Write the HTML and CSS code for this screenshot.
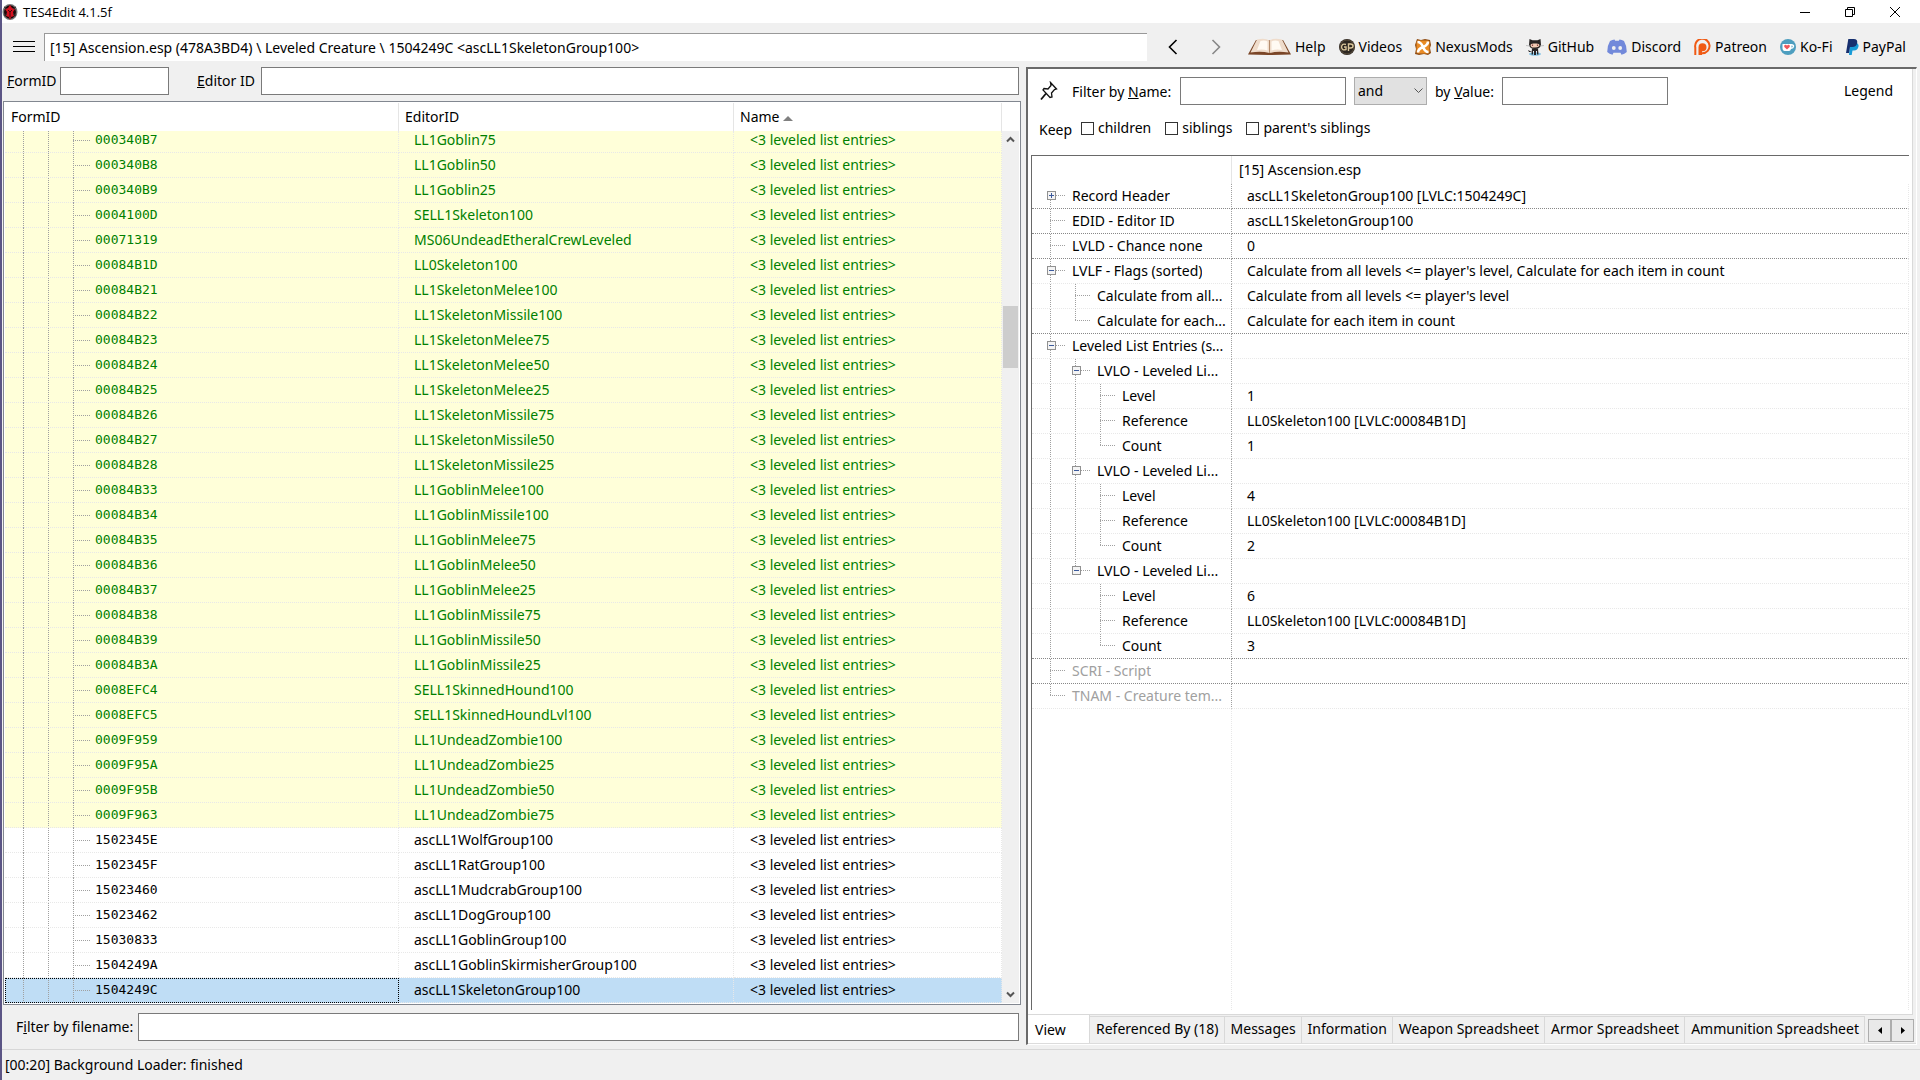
FILE: index.html
```html
<!DOCTYPE html>
<html lang="en">
<head>
<meta charset="utf-8">
<title>TES4Edit 4.1.5f</title>
<link rel="stylesheet" href="styles.css">
</head>
<body>
<div class="window">
  <header class="titlebar">
    <svg class="app-icon" width="16" height="20" viewBox="0 0 16 20"><ellipse cx="8" cy="10" rx="7.500" ry="8" fill="#777"/><ellipse cx="8" cy="10" rx="6" ry="6.800" fill="#1c0708"/><path d="M8 3l2 3 3 1-2 3 1 4-3 1-1 3-1-3-3-1 1-4-2-3 3-1z" fill="#d5101e"/><path d="M2 5l3 2M14 5l-3 2M2 14l3-2M14 14l-3-2" stroke="#333" fill="none"/><path d="M6 8l2 2 2-2M8 10v5" stroke="#40060b" fill="none"/></svg>
    <h1>TES4Edit 4.1.5f</h1>
    <div class="win-buttons">
      <button aria-label="Minimize"><svg width="12" height="12"><path d="M1 6.500h10" stroke="#000"/></svg></button>
      <button aria-label="Restore"><svg width="12" height="12"><path d="M1.500 3.500h7v7h-7zM3.500 3V1.500h7v7H9" stroke="#000" fill="none"/></svg></button>
      <button aria-label="Close"><svg width="12" height="12"><path d="M1 1l10 10M11 1L1 11" stroke="#000"/></svg></button>
    </div>
  </header>

  <nav class="toolbar">
    <button class="menu" aria-label="Menu"><svg width="22" height="12"><path d="M0 .5h22M0 5.500h22M0 10.500h22" stroke="#000"/></svg></button>
    <input class="path" aria-label="Path" value="[15] Ascension.esp (478A3BD4) \ Leveled Creature \ 1504249C &lt;ascLL1SkeletonGroup100&gt;">
    <button class="step" aria-label="Back"><svg width="12" height="16"><path d="M9.500 1L2.500 8l7 7" stroke="#000" stroke-width="1.600" fill="none"/></svg></button>
    <button class="step" aria-label="Forward"><svg width="12" height="16"><path d="M2.500 1l7 7-7 7" stroke="#888" stroke-width="1.600" fill="none"/></svg></button>
    <div class="links">
      <a href="#help"><svg width="43" height="18" viewBox="0 0 43 18"><path d="M0 16.500L8 2h27l8 14.500-19 .5h-4z" fill="#7a4526"/><path d="M2.500 14.500L9 1.500q8-2 12.500 1v12.500q-8-2-19-.5z" fill="#efdccb"/><path d="M40.500 14.500L34 1.500q-8-2-12.500 1v12.500q8-2 19-.5z" fill="#efdccb"/><path d="M9 12l3.500-9q4-1 7 .5v9q-5-1.500-10.500-.5zM34 12l-3.500-9q-4-1-7 .5v9q5-1.500 10.500-.5z" fill="#fffaf3"/><path d="M21.500 3v12" stroke="#b48c6c"/></svg>Help</a>
      <a href="#videos"><svg width="16" height="16" viewBox="0 0 16 16"><circle cx="8" cy="8" r="8" fill="#2c2620"/><circle cx="8" cy="8" r="7" fill="none" stroke="#5a4d3c"/><path d="M7 5.500Q3 4 2.500 8 3 12 7 10.500V8H5M9.500 12V5h2q2.500.200 2.500 2t-2.500 2h-2" fill="none" stroke="#d9c59a" stroke-width="1.400"/></svg>Videos</a>
      <a href="#nexus"><svg width="16" height="16" viewBox="0 0 16 16"><path d="M2 0l4 1 4-1 5 1 1 5-1 3 1 5-3 2-4-1-5 1-4-1 1-5-1-4z" fill="#8f4c12"/><rect x="1.500" y="1.500" width="13" height="13" rx="2" fill="#e98b25"/><path d="M8 8Q6 3 2.500 3M8 8q5-2 5-5.500M8 8q2 5 5.500 5M8 8q-5 2-5 5.500" stroke="#fff" stroke-width="2.600" fill="none"/></svg>NexusMods</a>
      <a href="#github"><svg width="18" height="18" viewBox="0 0 18 18"><ellipse cx="9" cy="16" rx="6" ry="1.800" fill="#86c5e6"/><path d="M3.500 1l3 1.300h5L14.500 1l.5 6q-1 4-6 4T3 7z" fill="#272323"/><path d="M4.500 7q0-2 4.500-1.500Q13.500 5 13.500 7t-4.500 2.500T4.500 7z" fill="#f2cbb4"/><path d="M6.500 6.500v1.500M11.500 6.500v1.500" stroke="#844" stroke-width="1.200"/><path d="M6 10.500h6l.5 6H11V13h-1v4H8v-4H7v3.500H5.500zM6 14H3l-1-2" fill="#272323"/><path d="M0 7.500l4 .5M18 7.500l-4 .5" stroke="#aaa" stroke-width=".7"/></svg>GitHub</a>
      <a href="#discord"><svg width="20" height="16" viewBox="0 0 20 16"><path d="M3 2Q5.500.5 7.500.5l.7 1.300h3.600L12.500.5Q15 .5 17 2q3 5 2.800 11-2.300 2.300-5.300 2.700l-1-1.900h-7l-1 1.900Q2.500 15.300.2 13 0 7 3 2z" fill="#7289da"/><ellipse cx="6.800" cy="9" rx="1.900" ry="2.100" fill="#f0f0f0"/><ellipse cx="13.200" cy="9" rx="1.900" ry="2.100" fill="#f0f0f0"/></svg>Discord</a>
      <a href="#patreon"><svg width="17" height="16" viewBox="0 0 17 16"><path d="M1.300 16V8.500a7.200 7.200 0 1 1 7.200 5.700h-1" fill="none" stroke="#f05a14" stroke-width="2"/><path d="M4.500 16V8.300a4 4 0 1 1 4 4H8V16z" fill="#f05a14"/></svg>Patreon</a>
      <a href="#kofi"><svg width="16" height="16" viewBox="0 0 16 16"><circle cx="8" cy="8" r="8" fill="#4d9ebf"/><path d="M2.500 5h9q3 .2 2.700 2.500T11 10q-.5 2-2 2H4.500q-2-.3-2-2.500z" fill="#fff"/><path d="M11.500 6.500q1.300 0 1.200 1t-1.200 1z" fill="#4d9ebf"/><path d="M7 10.500L4.300 8q-.8-2 1-2.200Q6.500 5.700 7 6.700q.5-1 1.700-.9 1.800.2 1 2.200z" fill="#f0575b"/></svg>Ko-Fi</a>
      <a href="#paypal"><svg width="13" height="16" viewBox="0 0 13 16"><path d="M4 4h6.500q2.500 1 2 3.500-.8 4-4.500 4H6.500L5.700 16H3z" fill="#179bd7"/><path d="M2.300 0h5.500q4 .2 3.400 4-.7 4-5 4H4L3 14H0z" fill="#17306f"/></svg>PayPal</a>
    </div>
  </nav>

  <main class="panes">
    <section class="nav-pane">
      <form class="search">
        <label for="formid"><u>F</u>ormID</label><input id="formid" class="box short">
        <label for="editorid" class="second"><u>E</u>ditor ID</label><input id="editorid" class="box grow">
      </form>
      <div class="list-frame">
        <div class="list">
          <table class="records">
            <colgroup><col class="c-id"><col class="c-editor"><col class="c-name"></colgroup>
            <thead><tr><th>FormID</th><th>EditorID</th><th>Name <span class="sort"></span></th></tr></thead>
            <tbody>
              <tr class="ok"><td>000340B7</td><td>LL1Goblin75</td><td>&lt;3 leveled list entries&gt;</td></tr>
              <tr class="ok"><td>000340B8</td><td>LL1Goblin50</td><td>&lt;3 leveled list entries&gt;</td></tr>
              <tr class="ok"><td>000340B9</td><td>LL1Goblin25</td><td>&lt;3 leveled list entries&gt;</td></tr>
              <tr class="ok"><td>0004100D</td><td>SELL1Skeleton100</td><td>&lt;3 leveled list entries&gt;</td></tr>
              <tr class="ok"><td>00071319</td><td>MS06UndeadEtheralCrewLeveled</td><td>&lt;3 leveled list entries&gt;</td></tr>
              <tr class="ok"><td>00084B1D</td><td>LL0Skeleton100</td><td>&lt;3 leveled list entries&gt;</td></tr>
              <tr class="ok"><td>00084B21</td><td>LL1SkeletonMelee100</td><td>&lt;3 leveled list entries&gt;</td></tr>
              <tr class="ok"><td>00084B22</td><td>LL1SkeletonMissile100</td><td>&lt;3 leveled list entries&gt;</td></tr>
              <tr class="ok"><td>00084B23</td><td>LL1SkeletonMelee75</td><td>&lt;3 leveled list entries&gt;</td></tr>
              <tr class="ok"><td>00084B24</td><td>LL1SkeletonMelee50</td><td>&lt;3 leveled list entries&gt;</td></tr>
              <tr class="ok"><td>00084B25</td><td>LL1SkeletonMelee25</td><td>&lt;3 leveled list entries&gt;</td></tr>
              <tr class="ok"><td>00084B26</td><td>LL1SkeletonMissile75</td><td>&lt;3 leveled list entries&gt;</td></tr>
              <tr class="ok"><td>00084B27</td><td>LL1SkeletonMissile50</td><td>&lt;3 leveled list entries&gt;</td></tr>
              <tr class="ok"><td>00084B28</td><td>LL1SkeletonMissile25</td><td>&lt;3 leveled list entries&gt;</td></tr>
              <tr class="ok"><td>00084B33</td><td>LL1GoblinMelee100</td><td>&lt;3 leveled list entries&gt;</td></tr>
              <tr class="ok"><td>00084B34</td><td>LL1GoblinMissile100</td><td>&lt;3 leveled list entries&gt;</td></tr>
              <tr class="ok"><td>00084B35</td><td>LL1GoblinMelee75</td><td>&lt;3 leveled list entries&gt;</td></tr>
              <tr class="ok"><td>00084B36</td><td>LL1GoblinMelee50</td><td>&lt;3 leveled list entries&gt;</td></tr>
              <tr class="ok"><td>00084B37</td><td>LL1GoblinMelee25</td><td>&lt;3 leveled list entries&gt;</td></tr>
              <tr class="ok"><td>00084B38</td><td>LL1GoblinMissile75</td><td>&lt;3 leveled list entries&gt;</td></tr>
              <tr class="ok"><td>00084B39</td><td>LL1GoblinMissile50</td><td>&lt;3 leveled list entries&gt;</td></tr>
              <tr class="ok"><td>00084B3A</td><td>LL1GoblinMissile25</td><td>&lt;3 leveled list entries&gt;</td></tr>
              <tr class="ok"><td>0008EFC4</td><td>SELL1SkinnedHound100</td><td>&lt;3 leveled list entries&gt;</td></tr>
              <tr class="ok"><td>0008EFC5</td><td>SELL1SkinnedHoundLvl100</td><td>&lt;3 leveled list entries&gt;</td></tr>
              <tr class="ok"><td>0009F959</td><td>LL1UndeadZombie100</td><td>&lt;3 leveled list entries&gt;</td></tr>
              <tr class="ok"><td>0009F95A</td><td>LL1UndeadZombie25</td><td>&lt;3 leveled list entries&gt;</td></tr>
              <tr class="ok"><td>0009F95B</td><td>LL1UndeadZombie50</td><td>&lt;3 leveled list entries&gt;</td></tr>
              <tr class="ok"><td>0009F963</td><td>LL1UndeadZombie75</td><td>&lt;3 leveled list entries&gt;</td></tr>
              <tr><td>1502345E</td><td>ascLL1WolfGroup100</td><td>&lt;3 leveled list entries&gt;</td></tr>
              <tr><td>1502345F</td><td>ascLL1RatGroup100</td><td>&lt;3 leveled list entries&gt;</td></tr>
              <tr><td>15023460</td><td>ascLL1MudcrabGroup100</td><td>&lt;3 leveled list entries&gt;</td></tr>
              <tr><td>15023462</td><td>ascLL1DogGroup100</td><td>&lt;3 leveled list entries&gt;</td></tr>
              <tr><td>15030833</td><td>ascLL1GoblinGroup100</td><td>&lt;3 leveled list entries&gt;</td></tr>
              <tr><td>1504249A</td><td>ascLL1GoblinSkirmisherGroup100</td><td>&lt;3 leveled list entries&gt;</td></tr>
              <tr class="selected"><td>1504249C</td><td>ascLL1SkeletonGroup100</td><td>&lt;3 leveled list entries&gt;</td></tr>
            </tbody>
          </table>
        </div>
        <div class="scrollbar">
          <button aria-label="Scroll up"><svg width="9" height="7"><path d="M1 5.500L4.500 2 8 5.500" stroke="#555" stroke-width="2" fill="none"/></svg></button>
          <div class="track"><div class="thumb"></div></div>
          <button aria-label="Scroll down"><svg width="9" height="7"><path d="M1 1.500L4.500 5 8 1.500" stroke="#555" stroke-width="2" fill="none"/></svg></button>
        </div>
      </div>
      <form class="file-filter">
        <label for="filename">F<u>i</u>lter by filename:</label><input id="filename" class="box grow">
      </form>
    </section>

    <section class="view-pane">
      <div class="view">
        <form class="filters">
          <svg class="pin" width="18" height="20" viewBox="0 0 18 20"><path d="M10.500 1.500l6 6.500-2 .5-3 3.500.5 4-2 .500-7-7.500 1-1.500 4 .5 3-3.500z" fill="#fff" stroke="#111" stroke-width="1.300"/><path d="M6 12.500l-5 6" stroke="#111" stroke-width="1.800"/></svg>
          <label for="fname" class="l-name">Filter by <u>N</u>ame:</label><input id="fname" class="box filter">
          <span class="drop"><select aria-label="Operator"><option>and</option></select><svg width="9" height="6"><path d="M.5.5l4 4 4-4" stroke="#555" fill="none"/></svg></span>
          <label for="fvalue" class="l-value">by <u>V</u>alue:</label><input id="fvalue" class="box filter">
          <button type="button" class="legend">Legend</button>
        </form>
        <form class="keep">
          <span>Keep</span>
          <label><input type="checkbox">children</label>
          <label><input type="checkbox">siblings</label>
          <label><input type="checkbox">parent's siblings</label>
        </form>
        <div class="tree">
          <table class="fields">
            <colgroup><col class="c-field"><col></colgroup>
            <thead><tr><th></th><th>[15] Ascension.esp</th></tr></thead>
            <tbody>
              <tr class="end"><td><div class="node"><i class="g f"><button class="plus" aria-label="Expand"></button></i><span>Record Header</span></div></td><td>ascLL1SkeletonGroup100 [LVLC:1504249C]</td></tr>
              <tr class="end"><td><div class="node"><i class="g t"></i><span>EDID - Editor ID</span></div></td><td>ascLL1SkeletonGroup100</td></tr>
              <tr class="end"><td><div class="node"><i class="g t"></i><span>LVLD - Chance none</span></div></td><td>0</td></tr>
              <tr><td><div class="node"><i class="g t"><button aria-label="Collapse"></button></i><span>LVLF - Flags (sorted)</span></div></td><td>Calculate from all levels &lt;= player's level, Calculate for each item in count</td></tr>
              <tr><td><div class="node"><i class="g v"></i><i class="g t"></i><span>Calculate from all...</span></div></td><td>Calculate from all levels &lt;= player's level</td></tr>
              <tr class="end"><td><div class="node"><i class="g v"></i><i class="g l"></i><span>Calculate for each...</span></div></td><td>Calculate for each item in count</td></tr>
              <tr><td><div class="node"><i class="g t"><button aria-label="Collapse"></button></i><span>Leveled List Entries (s...</span></div></td><td></td></tr>
              <tr><td><div class="node"><i class="g v"></i><i class="g t"><button aria-label="Collapse"></button></i><span>LVLO - Leveled Li...</span></div></td><td></td></tr>
              <tr><td><div class="node"><i class="g v"></i><i class="g v"></i><i class="g t"></i><span>Level</span></div></td><td>1</td></tr>
              <tr><td><div class="node"><i class="g v"></i><i class="g v"></i><i class="g t"></i><span>Reference</span></div></td><td>LL0Skeleton100 [LVLC:00084B1D]</td></tr>
              <tr><td><div class="node"><i class="g v"></i><i class="g v"></i><i class="g l"></i><span>Count</span></div></td><td>1</td></tr>
              <tr><td><div class="node"><i class="g v"></i><i class="g t"><button aria-label="Collapse"></button></i><span>LVLO - Leveled Li...</span></div></td><td></td></tr>
              <tr><td><div class="node"><i class="g v"></i><i class="g v"></i><i class="g t"></i><span>Level</span></div></td><td>4</td></tr>
              <tr><td><div class="node"><i class="g v"></i><i class="g v"></i><i class="g t"></i><span>Reference</span></div></td><td>LL0Skeleton100 [LVLC:00084B1D]</td></tr>
              <tr><td><div class="node"><i class="g v"></i><i class="g v"></i><i class="g l"></i><span>Count</span></div></td><td>2</td></tr>
              <tr><td><div class="node"><i class="g v"></i><i class="g l"><button aria-label="Collapse"></button></i><span>LVLO - Leveled Li...</span></div></td><td></td></tr>
              <tr><td><div class="node"><i class="g v"></i><i class="g"></i><i class="g t"></i><span>Level</span></div></td><td>6</td></tr>
              <tr><td><div class="node"><i class="g v"></i><i class="g"></i><i class="g t"></i><span>Reference</span></div></td><td>LL0Skeleton100 [LVLC:00084B1D]</td></tr>
              <tr class="end"><td><div class="node"><i class="g v"></i><i class="g"></i><i class="g l"></i><span>Count</span></div></td><td>3</td></tr>
              <tr class="end empty"><td><div class="node"><i class="g t"></i><span>SCRI - Script</span></div></td><td></td></tr>
              <tr class="empty"><td><div class="node"><i class="g l"></i><span>TNAM - Creature tem...</span></div></td><td></td></tr>
            </tbody>
          </table>
          <div class="rest"></div>
        </div>
      </div>
      <div class="tabs">
        <button class="active">View</button><button>Referenced By (18)</button><button>Messages</button><button>Information</button><button>Weapon Spreadsheet</button><button>Armor Spreadsheet</button><button>Ammunition Spreadsheet</button>
        <div class="spin">
          <button aria-label="Previous tabs"><svg width="4" height="7"><path d="M4 0v7L0 3.500z"/></svg></button>
          <button aria-label="Next tabs"><svg width="4" height="7"><path d="M0 0v7l4-3.500z"/></svg></button>
        </div>
      </div>
    </section>
  </main>

  <footer class="status">[00:20] Background Loader: finished</footer>
</div>
</body>
</html>
```
FILE: styles.css
```css
* { box-sizing: border-box; }
body {
  margin: 0;
  font: 14px/24px "Noto Sans", "Open Sans", sans-serif;
  color: #000;
  background: #f0f0f0;
}
button, input, select { font: inherit; color: inherit; margin: 0; }
button { border: 0; padding: 0; background: none; }
svg { display: block; flex: none; }
label { white-space: nowrap; }

.window {
  display: flex;
  flex-direction: column;
  min-height: 100vh;
  border-left: 2px solid #5b5585;
}

/* Title bar and toolbar */
.titlebar { display: flex; align-items: center; height: 23px; background: #fff; }
h1 { margin: 0 0 0 5px; font: 400 13px/20px "Open Sans", sans-serif; }
.win-buttons { display: flex; margin-left: auto; padding-right: 3px; }
.win-buttons button { display: grid; place-items: center; width: 45px; height: 21px; }

.toolbar { display: flex; align-items: center; height: 44px; padding: 3px 14px 0 11px; }
.menu { width: 22px; margin-right: 9px; }
.path {
  flex: 1;
  min-width: 0;
  height: 28px;
  padding: 0 5px;
  border: 0;
  border-top: 1px solid #999;
  border-left: 1px solid #999;
  background: #fff;
}
.step { display: grid; place-items: center; width: 43px; height: 28px; }
.path + .step { margin-left: 4px; }
.links { display: flex; justify-content: space-between; width: 658px; margin-left: 11px; }
.links a { display: flex; align-items: center; gap: 4px; color: #000; text-decoration: none; }

/* Two panes */
.panes {
  flex: 1;
  display: grid;
  grid-template-columns: minmax(0, 1019fr) minmax(0, 891fr);
  gap: 5px;
  padding-right: 3px;
}
.nav-pane { display: flex; flex-direction: column; padding-left: 1px; }
.box { height: 28px; min-width: 0; padding: 0 4px; border: 1px solid #7a7a7a; background: #fff; }
.grow { flex: 1; }
.search { display: flex; align-items: center; height: 28px; padding: 0 2px 0 4px; }
.search label { width: 53px; }
.search .second { width: 64px; margin-left: 28px; }
.short { width: 109px; }

.list-frame {
  flex: 1;
  display: flex;
  margin-top: 6px;
  padding: 1px;
  border: 1px solid #828790;
  background: #fff;
}
.list { flex: 1; display: flex; flex-direction: column; overflow: hidden; }
table { width: 100%; border-collapse: separate; border-spacing: 0; table-layout: fixed; }
th { font-weight: 400; text-align: left; height: 28px; padding: 0 6px; border-right: 1px solid #e5e5e5; background: #fff; }
td { height: 25px; padding: 0; overflow: hidden; white-space: nowrap; border-bottom: 1px dotted #e8e8e8; border-right: 1px dotted #e8e8e8; }
.records tbody tr:first-child td { height: 22px; line-height: 18px; vertical-align: top; }
.records td { padding-left: 15px; }
.records td:last-child { padding-left: 16px; }
.c-id { width: 394px; }
.c-editor { width: 335px; }
.records td:first-child {
  padding-left: 90px;
  font: 13px/24px "DejaVu Sans Mono", monospace;
  background:
    linear-gradient(#a0a0a0 1px, transparent 1px) 18px 0 / 1px 2px repeat-y,
    linear-gradient(#a0a0a0 1px, transparent 1px) 43px 0 / 1px 2px repeat-y,
    linear-gradient(#a0a0a0 1px, transparent 1px) 68px 0 / 1px 2px repeat-y;
}
.records td:first-child::before {
  content: "";
  display: inline-block;
  vertical-align: middle;
  width: 17px;
  height: 1px;
  margin: 0 5px 0 -22px;
  background: linear-gradient(90deg, #a0a0a0 1px, transparent 1px) 0 0 / 2px 1px;
}
.ok { background: #ffffd9; color: #008000; }
.selected { background: #bfddf5; }
.records .selected td:first-child { outline: 1px dotted #000; outline-offset: -1px; }
.sort { display: inline-block; vertical-align: middle; border: 5px solid transparent; border-top: 0; border-bottom-color: #808080; }

.scrollbar { display: flex; flex-direction: column; width: 17px; margin-top: 28px; background: #f0f0f0; }
.scrollbar button { display: grid; place-items: center; height: 17px; }
.track { flex: 1; padding: 158px 1px 0; }
.thumb { height: 62px; background: #cdcdcd; }

.file-filter { display: flex; align-items: center; padding: 8px 2px 4px 13px; }
.file-filter label { width: 122px; }

/* Record view */
.view-pane {
  display: flex;
  flex-direction: column;
  border: 2px solid #696969;
  border-right: 1px solid #fff;
  border-bottom: 1px solid #fff;
}
.view {
  flex: 1;
  display: flex;
  flex-direction: column;
  margin-right: 3px;
  padding: 8px 3px 4px 3px;
  border-right: 1px solid #d9d9d9;
  border-bottom: 1px solid #d9d9d9;
  background: #fff;
}
.filters { display: flex; align-items: center; padding-left: 9px; }
.pin { margin-right: 14px; }
.l-name { width: 108px; padding-top: 2px; }
.filter { width: 166px; }
.drop { display: grid; align-items: center; width: 73px; margin: 0 8px; }
.drop > * { grid-area: 1 / 1; }
.drop svg { justify-self: end; margin-right: 4px; pointer-events: none; }
.drop select {
  appearance: none;
  height: 28px;
  padding: 0 3px;
  border: 1px solid #adadad;
  border-radius: 0;
  background: #e1e1e1;
}
.l-value { width: 67px; padding-top: 2px; }
.legend { margin-left: auto; padding-right: 16px; }
.keep { display: flex; align-items: center; height: 50px; padding: 0 8px 4px; }
.keep span { width: 42px; padding-top: 3px; }
.keep label { display: flex; align-items: center; gap: 4px; margin-right: 14px; }
.keep input { appearance: none; width: 13px; height: 13px; border: 1px solid #333; background: #fff; }

.tree { flex: 1; display: flex; flex-direction: column; border: 1px solid #696969; border-width: 1px 0 0 1px; }
.c-field { width: 200px; }
.fields th { padding: 0 7px; border-right-color: #fff; }
.fields th:first-child { border-right-color: #e5e5e5; }
.fields td { padding-left: 15px; }
.fields td:first-child { padding: 0 5px 0 14px; border-right-color: #a0a0a0; }
.fields .end td { border-bottom-color: #888; }
.empty { color: #a0a0a0; }
.node { display: flex; }
.node span { overflow: hidden; text-overflow: ellipsis; padding-left: 1px; }
.g { position: relative; flex: none; width: 25px; height: 25px; margin-bottom: -1px; }
.g.v, .g.t, .g.l, .g.f { background: linear-gradient(#a0a0a0 1px, transparent 1px) 4px 0 / 1px 2px repeat-y; }
.g.l { background-clip: content-box; padding-bottom: 13px; }
.g.f { background-clip: content-box; padding-top: 12px; }
.g.t::after, .g.l::after, .g.f::after {
  content: "";
  position: absolute;
  left: 4px;
  top: 11px;
  width: 16px;
  height: 1px;
  background: linear-gradient(90deg, #a0a0a0 1px, transparent 1px) 0 0 / 2px 1px;
}
.g button {
  position: absolute;
  z-index: 1;
  left: 1px;
  top: 7px;
  width: 9px;
  height: 9px;
  border: 1px solid #919191;
  background:
    linear-gradient(#3c5a9c, #3c5a9c) 1px 3px / 5px 1px no-repeat,
    #f4f4f4;
}
.g .plus {
  background:
    linear-gradient(#3c5a9c, #3c5a9c) 1px 3px / 5px 1px no-repeat,
    linear-gradient(#3c5a9c, #3c5a9c) 3px 1px / 1px 5px no-repeat,
    #f4f4f4;
}
.rest { flex: 1; margin-left: 199px; border: 1px dotted #e8e8e8; border-width: 0 1px; }

.tabs { display: flex; height: 29px; padding-right: 2px; border-bottom: 1px solid #dcdcdc; }
.tabs > button { flex: none; height: 27px; margin-top: 1px; padding: 0 5px 2px 6px; border-top: 1px solid #d9d9d9; border-right: 1px solid #d9d9d9; white-space: nowrap; }
.tabs > .active { width: 62px; height: 28px; margin-top: 0; padding: 2px 0 0 7px; border-top: 0; background: #fff; text-align: left; }
.spin { display: flex; margin: 4px 0 1px auto; }
.spin button { display: grid; place-items: center; width: 23px; border: 1px solid #adadad; background: #e9e9e9; }

.status { height: 31px; margin-top: 4px; padding: 3px; border-top: 1px solid #d7d7d7; }
```
